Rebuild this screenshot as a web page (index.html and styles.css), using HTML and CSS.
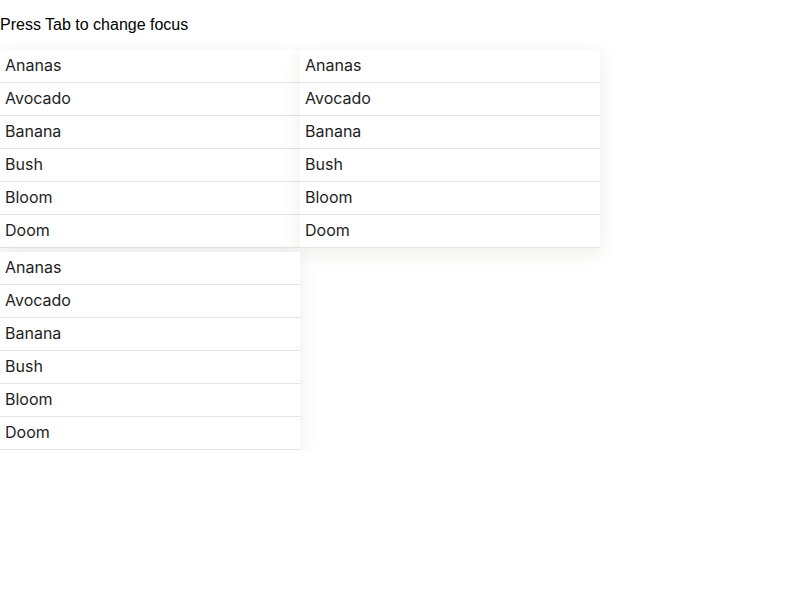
FILE: index.html
```html
<!DOCTYPE html>
<html>
<head>
<meta charset="utf-8">
<link rel="stylesheet" href="styles.css">
</head>
<body>
<p class="hint">Press Tab to change focus</p>
<div class="lists">
  <ul class="list">
    <li class="item">Ananas</li>
    <li class="item">Avocado</li>
    <li class="item">Banana</li>
    <li class="item">Bush</li>
    <li class="item">Bloom</li>
    <li class="item">Doom</li>
  </ul>
  <ul class="list">
    <li class="item">Ananas</li>
    <li class="item">Avocado</li>
    <li class="item">Banana</li>
    <li class="item">Bush</li>
    <li class="item">Bloom</li>
    <li class="item">Doom</li>
  </ul>
  <ul class="list">
    <li class="item">Ananas</li>
    <li class="item">Avocado</li>
    <li class="item">Banana</li>
    <li class="item">Bush</li>
    <li class="item">Bloom</li>
    <li class="item">Doom</li>
  </ul>
</div>
</body>
</html>
```

FILE: styles.css
```css
html, body {
  margin: 0;
  padding: 0;
  background: #fff;
}
body {
  font-family: "Liberation Sans", Arial, sans-serif;
  font-size: 16px;
  color: #000;
}
.hint {
  margin: 16px 0;
  line-height: 18px;
}
.lists {
  display: flex;
  flex-wrap: wrap;
  row-gap: 4px;
}
.list {
  width: 300px;
  margin: 0;
  padding: 0;
  list-style: none;
  background: #fff;
  box-shadow: 0 5px 18px rgba(60, 60, 30, 0.09);
}
.item {
  height: 31px;
  line-height: 31px;
  padding: 0 5px 1px;
  border-bottom: 1px solid #e4e4e4;
  font-family: Inter, "Noto Sans", sans-serif;
  font-size: 16px;
  color: #1e1e1e;
}
```
